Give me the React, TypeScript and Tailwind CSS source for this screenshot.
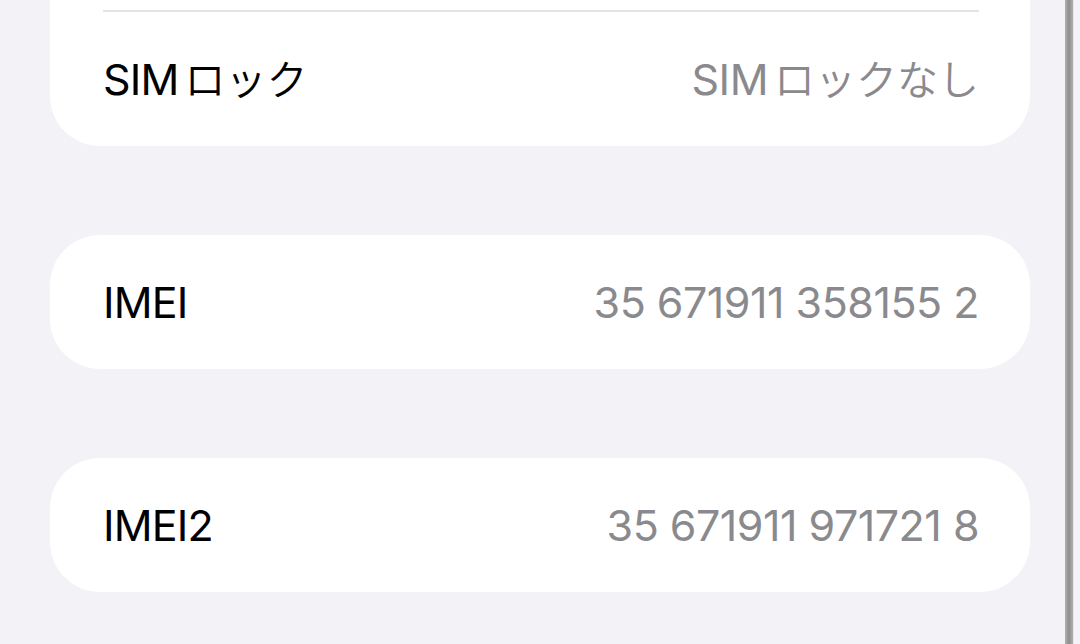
const font = {fontFamily: '"Inter", "Noto Sans CJK JP", sans-serif'};

type Row = {label: string; value: string};

// Latin and kana are set apart: the kana sit a little smaller and thinner, as on iOS
function Mixed({text}: {text: string}) {
    const parts = text.match(/[A-Za-z0-9 ]+|[^A-Za-z0-9 ]+/g) ?? [];
    return (
        <>
            {parts.map((p, i) =>
                /[A-Za-z0-9]/.test(p)
                    ? <span key={i}>{p}</span>
                    : <span key={i} className="ml-[6px] text-[41px] font-[350] tracking-normal">{p}</span>
            )}
        </>
    );
}

function InfoRow({label, value}: Row) {
    return (
        <div className="flex h-[134px] items-center justify-between pl-[53px] pr-[51px]">
            <span className="text-[43px] leading-none text-black tracking-[-0.8px]"><Mixed text={label}/></span>
            <span className="text-[43px] leading-none text-[#8a8a8e] tracking-[-0.5px]"><Mixed text={value}/></span>
        </div>
    );
}

export default function App() {
    return (
        <div className="flex h-[644px] w-[1080px] overflow-hidden bg-[#f2f2f7]" style={font}>
            <div className="flex flex-1 flex-col gap-[89px] pl-[50px] pr-[35px]">
                <div className="rounded-b-[50px] bg-white pt-[10px]">
                    <div className="ml-[53px] mr-[51px] h-[2px] bg-[#e4e4e7]"/>
                    <InfoRow label="SIMロック" value="SIMロックなし"/>
                </div>
                <div className="rounded-[50px] bg-white">
                    <InfoRow label="IMEI" value="35 671911 358155 2"/>
                </div>
                <div className="rounded-[50px] bg-white">
                    <InfoRow label="IMEI2" value="35 671911 971721 8"/>
                </div>
            </div>
            <div className="w-[8px] bg-gradient-to-r from-[#b0b0b0] via-[#8e8e8e] to-[#b0b0b0]"/>
            <div className="w-[7px] border-l border-[#e6e6ea] bg-[#f4f4f8]"/>
        </div>
    );
}
